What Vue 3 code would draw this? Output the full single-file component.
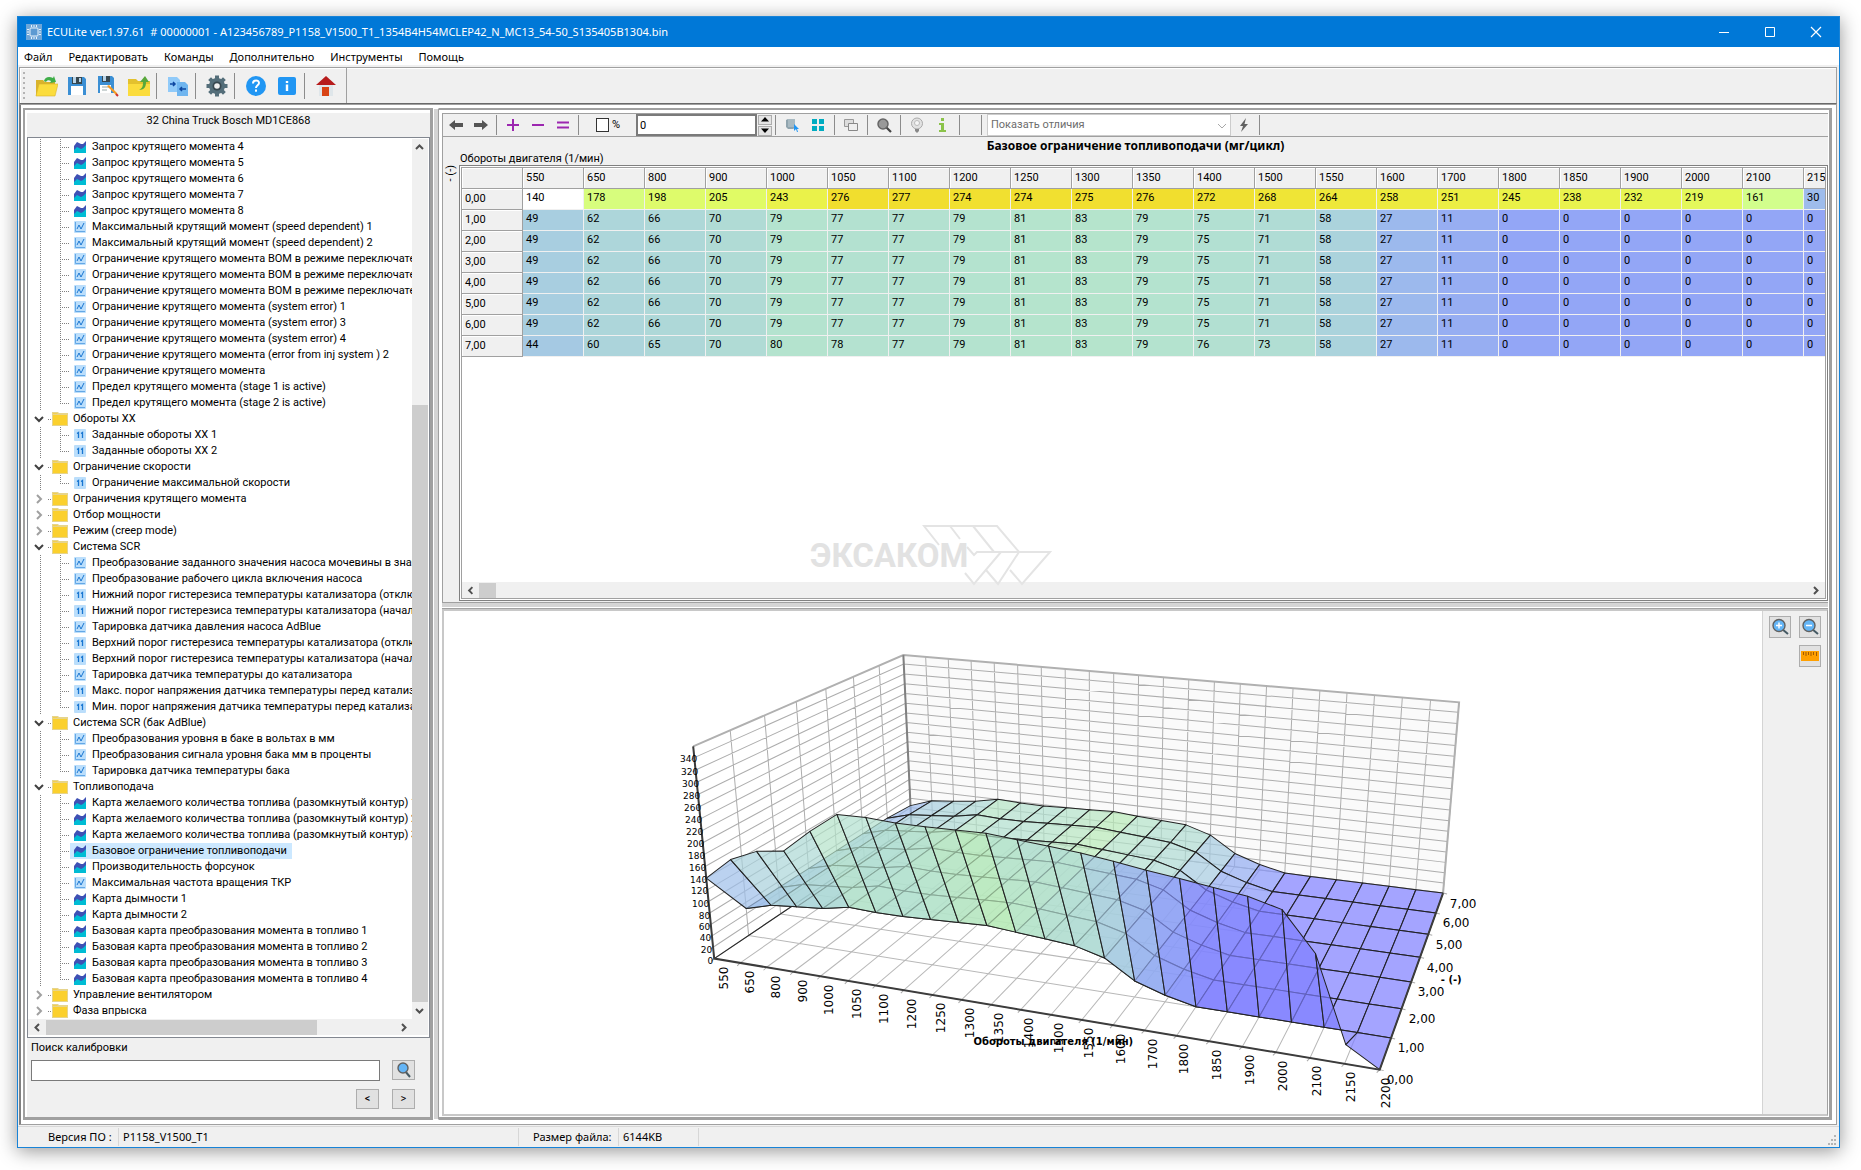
<script setup>
import { ref } from 'vue'

const menu = ['Файл', 'Редактировать', 'Команды', 'Дополнительно', 'Инструменты', 'Помощь']

const leaves = (kind, names) => names.map((name) => ({ kind, name }))
const groups = [
  {
    open: true,
    hidden: true,
    children: [
      ...leaves('map', [4, 5, 6, 7, 8].map((n) => `Запрос крутящего момента ${n}`)),
      ...leaves('curve', [
        'Максимальный крутящий момент (speed dependent) 1',
        'Максимальный крутящий момент (speed dependent) 2',
        'Ограничение крутящего момента ВОМ в режиме переключателя 1',
        'Ограничение крутящего момента ВОМ в режиме переключателя 2',
        'Ограничение крутящего момента ВОМ в режиме переключателя 3',
        'Ограничение крутящего момента (system error) 1',
        'Ограничение крутящего момента (system error) 3',
        'Ограничение крутящего момента (system error) 4',
        'Ограничение крутящего момента (error from inj system ) 2',
        'Ограничение крутящего момента',
        'Предел крутящего момента (stage 1 is active)',
        'Предел крутящего момента (stage 2 is active)'
      ])
    ]
  },
  { name: 'Обороты XX', open: true, children: leaves('value', ['Заданные обороты XX 1', 'Заданные обороты XX 2']) },
  { name: 'Ограничение скорости', open: true, children: leaves('value', ['Ограничение максимальной скорости']) },
  { name: 'Ограничения крутящего момента', children: [] },
  { name: 'Отбор мощности', children: [] },
  { name: 'Режим (creep mode)', children: [] },
  {
    name: 'Система SCR',
    open: true,
    children: [
      ...leaves('curve', ['Преобразование заданного значения насоса мочевины в значение', 'Преобразование рабочего цикла включения насоса']),
      ...leaves('value', ['Нижний порог гистерезиса температуры катализатора (отключение)', 'Нижний порог гистерезиса температуры катализатора (начало)']),
      ...leaves('curve', ['Тарировка датчика давления насоса AdBlue']),
      ...leaves('value', ['Верхний порог гистерезиса температуры катализатора (отключение)', 'Верхний порог гистерезиса температуры катализатора (начало)']),
      ...leaves('curve', ['Тарировка датчика температуры до катализатора']),
      ...leaves('value', ['Макс. порог напряжения датчика температуры перед катализатором', 'Мин. порог напряжения датчика температуры перед катализатором'])
    ]
  },
  {
    name: 'Система SCR (бак AdBlue)',
    open: true,
    children: leaves('curve', ['Преобразования уровня в баке в вольтах в мм', 'Преобразования сигнала уровня бака мм в проценты', 'Тарировка датчика температуры бака'])
  },
  {
    name: 'Топливоподача',
    open: true,
    children: [
      ...leaves('map', [
        'Карта желаемого количества топлива (разомкнутый контур) 1',
        'Карта желаемого количества топлива (разомкнутый контур) 2',
        'Карта желаемого количества топлива (разомкнутый контур) 3',
        'Базовое ограничение топливоподачи',
        'Производительность форсунок'
      ]),
      ...leaves('curve', ['Максимальная частота вращения ТКР']),
      ...leaves('map', [
        'Карта дымности 1',
        'Карта дымности 2',
        'Базовая карта преобразования момента в топливо 1',
        'Базовая карта преобразования момента в топливо 2',
        'Базовая карта преобразования момента в топливо 3',
        'Базовая карта преобразования момента в топливо 4'
      ])
    ]
  },
  { name: 'Управление вентилятором', children: [] },
  { name: 'Фаза впрыска', children: [] }
]
const selected = ref('Базовое ограничение топливоподачи')

const rpm = [550, 650, 800, 900, 1000, 1050, 1100, 1200, 1250, 1300, 1350, 1400, 1500, 1550, 1600, 1700, 1800, 1850, 1900, 2000, 2100, 2150, 2200]
const common = [49, 62, 66, 70, 79, 77, 77, 79, 81, 83, 79, 75, 71, 58, 27, 11, 0, 0, 0, 0, 0, 0, 0]
const values = [
  [140, 178, 198, 205, 243, 276, 277, 274, 274, 275, 276, 272, 268, 264, 258, 251, 245, 238, 232, 219, 161, 30, 0],
  common, common, common, common, common, common,
  [44, 60, 65, 70, 80, 78, 77, 79, 81, 83, 79, 76, 73, 58, 27, 11, 0, 0, 0, 0, 0, 0, 0]
]
const rowName = (j) => `${j},00`

const mix = (stops, v) => {
  let k = 1
  while (k < stops.length - 1 && v > stops[k][0]) k++
  const [v0, a] = stops[k - 1]
  const [v1, b] = stops[k]
  const t = Math.min(1, Math.max(0, (v - v0) / (v1 - v0)))
  return `rgb(${a.map((c, n) => Math.round(c + (b[n] - c) * t)).join(',')})`
}
const cellStops = [
  [0, [147, 166, 246]], [27, [156, 185, 237]], [49, [168, 206, 224]], [66, [174, 216, 216]], [79, [180, 227, 207]],
  [161, [210, 254, 140]], [205, [224, 251, 101]], [243, [234, 242, 74]], [264, [238, 232, 58]], [276, [241, 222, 46]]
]
const surfStops = [
  [0, [126, 126, 255]], [11, [134, 148, 250]], [27, [146, 171, 241]], [49, [158, 191, 234]], [66, [171, 213, 216]],
  [78, [178, 224, 205]], [83, [184, 234, 184]]
]

/* perspective projection of the unit box onto the chart canvas */
const Z_MAX = 358
const NX = 22
const NY = 7
const project = (i, j, v) => {
  const x = i / NX
  const y = j / NY
  const z = v / Z_MAX
  const w = 1 - 0.1458 * x + 0.2693 * y - 0.0509 * z
  return [(715 + 463.8 * x + 442.7 * y - 56.3 * z) / w, (959 - 45 * x + 90 * y - 250 * z) / w]
}
const path = (...pts) => pts.map((p, n) => (n ? 'L' : 'M') + p[0].toFixed(1) + ' ' + p[1].toFixed(1)).join('')
const range = (n) => Array.from({ length: n }, (_, k) => k)

const floorLines = [
  ...range(NX + 1).map((i) => path(project(i, 0, 0), project(i, NY, 0))),
  ...range(NY + 1).map((j) => path(project(0, j, 0), project(NX, j, 0)))
].join('')
const wallLines = [
  ...range(NX + 1).map((i) => path(project(i, NY, 0), project(i, NY, Z_MAX))),
  ...range(NY + 1).map((j) => path(project(0, j, 0), project(0, j, Z_MAX))),
  ...range(18).map((k) => path(project(0, 0, k * 20), project(0, NY, k * 20), project(NX, NY, k * 20)))
].join('')
const wallTop = path(project(0, 0, Z_MAX), project(0, NY, Z_MAX), project(NX, NY, Z_MAX), project(NX, NY, 0))
const backWall = path(project(0, NY, 0), project(0, NY, Z_MAX), project(NX, NY, Z_MAX), project(NX, NY, 0)) + 'Z'
const backEdge = path(project(0, NY, 0), project(0, NY, Z_MAX))
const leftFloor = path(project(0, 0, 0), project(0, NY, 0))
const axes = path(project(0, 0, Z_MAX), project(0, 0, 0), project(NX, 0, 0), project(NX, NY, 0))
const ticks = range(NX + 1).map((i) => {
  const p = project(i, 0, 0)
  return path([p[0] - 3, p[1] + 3], p)
}).join('') + range(18).map((k) => {
  const p = project(0, 0, k * 20)
  return path([p[0] - 3, p[1] + 2], p)
}).join('') + range(NY + 1).map((j) => {
  const p = project(NX, j, 0)
  return path([p[0] + 4, p[1] + 1], p)
}).join('')
const quads = range(NY).reverse().flatMap((j) => range(NX).map((i) => ({
  d: path(project(i, j, values[j][i]), project(i + 1, j, values[j][i + 1]), project(i + 1, j + 1, values[j + 1][i + 1]), project(i, j + 1, values[j + 1][i])) + 'Z',
  fill: mix(surfStops, values[j + 1][i])
})))
const xLabels = rpm.map((t, i) => {
  const [x, y] = project(i, 0, 0)
  return { t, x: Math.round(x + 14 - i / 6), y: Math.round(y + 8) }
})
const yLabels = range(8).map((j) => {
  const [x, y] = project(NX, j, 0)
  return { t: rowName(j), x: Math.round(x + 7), y: Math.round(y + 14) }
})
const zLabels = range(18).map((k) => {
  const [x, y] = project(0, 0, k * 20)
  return { t: k * 20, x: Math.round(x - 1 + k / 4), y: Math.round(y + 5) }
})
</script>

<template>
  <div class="desktop">
    <div class="window">
      <header class="titlebar">
        <svg class="chip" width="16" height="16" viewBox="0 0 16 16"><rect width="16" height="16" fill="#6ea6d8" /><rect x="4" y="4" width="8" height="8" rx="1" fill="#5c9ad2" stroke="#e8f2fb" /><path d="M5.500 1v2M8 1v2M10.500 1v2M5.500 13v2M8 13v2M10.500 13v2M1 5.500h2M1 8h2M1 10.500h2M13 5.500h2M13 8h2M13 10.500h2" stroke="#e8f2fb" /></svg>
        <h1>ECULite ver.1.97.61 &nbsp;# 00000001 - A123456789_P1158_V1500_T1_1354B4H54MCLEP42_N_MC13_54-50_S135405B1304.bin</h1>
        <button class="cap" aria-label="Свернуть"><svg width="12" height="12" viewBox="0 0 12 12"><path d="M1 6.500h10" stroke="#fff" /></svg></button>
        <button class="cap" aria-label="Развернуть"><svg width="12" height="12" viewBox="0 0 12 12"><path d="M1.500 1.500h9v9h-9z" stroke="#fff" fill="none" /></svg></button>
        <button class="cap" aria-label="Закрыть"><svg width="12" height="12" viewBox="0 0 12 12"><path d="M1 1l10 10M11 1L1 11" stroke="#fff" stroke-width="1.200" /></svg></button>
      </header>
      <nav class="menu"><button v-for="m in menu" :key="m">{{ m }}</button></nav>

      <div class="bar">
        <div class="tools">
          <i class="grip"></i>
          <button aria-label="Открыть"><svg width="24" height="24" viewBox="0 0 24 24"><path d="M2 6h7l2 2h10v14H2z" fill="#d9b32c" /><path d="M10 7c1-4 5-5 9-3l1-2 2 6-6 1 1-2c-2-1-4-1-5 1z" fill="#3fae49" /><path d="M5 10h19l-3 12H2z" fill="#fbdc3d" stroke="#d9b32c" stroke-width=".6" /></svg></button>
          <button aria-label="Сохранить"><svg width="24" height="24" viewBox="0 0 24 24"><path d="M3 3h16l2 2v16H3z" fill="#3b8fd4" /><path d="M7 3h10v7H7z" fill="#37474f" /><path d="M8 3h3v6H8zM14 4h2v4h-2z" fill="#b9d4e8" /><path d="M6 12h12v9H6z" fill="#fff" /></svg></button>
          <button aria-label="Сохранить как"><svg width="24" height="24" viewBox="0 0 24 24"><path d="M2 2h14l2 2v15H2z" fill="#3b8fd4" /><path d="M6 2h8v6H6z" fill="#37474f" /><path d="M7 2h3v5H7z" fill="#b9d4e8" /><path d="M4 11h11v8H4z" fill="#fff" /><path d="M6 13h7M6 16h5" stroke="#9aa" /><path d="M11 12l9 9 2 1-1-3-8-8z" fill="#f59b23" /><path d="M20 20l2 2" stroke="#c33" stroke-width="2" /></svg></button>
          <button aria-label="Импорт"><svg width="24" height="24" viewBox="0 0 24 24"><path d="M1 5h8l2 2h12v15H1z" fill="#e3c12e" /><path d="M1 10h22v12H1z" fill="#fbdc3d" /><path d="M12 16c6 0 7-4 7-8h3l-4-6-5 6h3c0 3 0 6-4 8z" fill="#58a83c" /></svg></button>
          <i class="sep"></i>
          <button aria-label="Сравнить"><svg width="24" height="24" viewBox="0 0 24 24"><path d="M2 3h9l3 3v12H2z" fill="#90caf9" /><path d="M11 8h8l3 3v11H11z" fill="#6fb5ef" /><path d="M4 10h5M7 8l2 2-2 2M20 15h-6M16 13l-2 2 2 2" stroke="#0d47a1" stroke-width="1.500" fill="none" /></svg></button>
          <i class="sep"></i>
          <button aria-label="Настройки"><svg width="24" height="24" viewBox="0 0 24 24"><circle cx="12" cy="12" r="8" fill="#546e7a" /><path d="M12 1.500v21M1.500 12h21M4.600 4.600l14.800 14.800M19.400 4.600L4.600 19.400" stroke="#546e7a" stroke-width="4" /><circle cx="12" cy="12" r="4.500" fill="#37474f" /><circle cx="12" cy="12" r="2.800" fill="#efefef" /></svg></button>
          <i class="sep"></i>
          <button aria-label="Справка"><svg width="24" height="24" viewBox="0 0 24 24"><circle cx="12" cy="12" r="10" fill="#2196f3" /><path d="M9 9.500c0-4 6-4 6-.5 0 2.300-3 2.300-3 5" stroke="#fff" stroke-width="2" fill="none" /><rect x="11" y="15.500" width="2" height="2.200" fill="#fff" /></svg></button>
          <button aria-label="О программе"><svg width="24" height="24" viewBox="0 0 24 24"><rect x="3" y="3" width="18" height="18" rx="2" fill="#2196f3" /><path d="M12 7v2M12 10.500V17" stroke="#fff" stroke-width="2.400" /></svg></button>
          <i class="sep"></i>
          <button aria-label="Домой"><svg width="24" height="24" viewBox="0 0 24 24"><path d="M5 11h14v11H5z" fill="#dfe6ea" /><path d="M12 2l10 9H2z" fill="#b71c1c" /><path d="M8 13h7v9H8z" fill="#d84315" /></svg></button>
        </div>
      </div>

      <main class="main">
        <aside class="left">
          <h2>32 China Truck Bosch MD1CE868</h2>
          <div class="tree">
            <div class="viewport">
              <ul class="list">
                <li v-for="(g, gi) in groups" :key="gi">
                  <div v-if="!g.hidden" class="row">
                    <svg class="chev" width="12" height="12" viewBox="0 0 12 12"><path v-if="g.open" d="M2 4l4 4 4-4" stroke="#404040" stroke-width="2" fill="none" /><path v-else d="M4 2l4 4-4 4" stroke="#a0a0a0" stroke-width="2" fill="none" /></svg>
                    <i class="stub"></i>
                    <svg class="folder" width="16" height="14" viewBox="0 0 16 14"><path d="M0 0h6l1 1h9v13H0z" fill="#e6d48c" /><path d="M1 3h14v10H1z" fill="#fbd02d" /><path d="M1 1h4l1 1H1z" fill="#f3cf50" /></svg>
                    <span>{{ g.name }}</span>
                  </div>
                  <ul v-if="g.open" class="list">
                    <li v-for="c in g.children" :key="c.name" class="row leaf">
                      <i class="rail"></i><i class="branch"></i>
                      <span class="item" :class="{ on: c.name === selected }">
                        <svg v-if="c.kind === 'map'" width="12" height="12" viewBox="0 0 12 12"><path d="M0 5l3-4 4 2 2 0 3-3v12H0z" fill="#3f51b5" /><path d="M0 9l3-3 4 2 2-1 3-3v8H0z" fill="#00bcd4" /></svg>
                        <svg v-else-if="c.kind === 'curve'" width="12" height="12" viewBox="0 0 12 12"><rect width="12" height="12" rx="1" fill="#bbdefb" /><path d="M1.500 1v9.500H11" stroke="#64a8e6" fill="none" /><path d="M3 8l2-4 2 4 3-6" stroke="#1976d2" fill="none" /></svg>
                        <svg v-else width="12" height="12" viewBox="0 0 12 12"><rect width="12" height="12" rx="1" fill="#bbdefb" /><path d="M3 4.500l1.500-1V9M7 4.500l1.500-1V9" stroke="#1976d2" stroke-width="1.300" fill="none" /></svg>
                        <span>{{ c.name }}</span>
                      </span>
                    </li>
                  </ul>
                </li>
              </ul>
              <div class="vscroll">
                <svg width="15" height="17" viewBox="0 0 15 17"><path d="M4 10l3.500-3.500L11 10" stroke="#505050" stroke-width="2" fill="none" /></svg>
                <i class="track"></i><i class="thumb"></i>
                <svg width="15" height="17" viewBox="0 0 15 17"><path d="M4 7l3.500 3.500L11 7" stroke="#505050" stroke-width="2" fill="none" /></svg>
              </div>
            </div>
            <div class="hscroll">
              <svg width="18" height="15" viewBox="0 0 18 15"><path d="M11 4L7.500 7.500 11 11" stroke="#505050" stroke-width="2" fill="none" /></svg>
              <i class="thumb"></i><i class="track"></i>
              <svg width="18" height="15" viewBox="0 0 18 15"><path d="M7 4l3.500 3.500L7 11" stroke="#505050" stroke-width="2" fill="none" /></svg>
              <i class="corner"></i>
            </div>
          </div>
          <form class="search" @submit.prevent>
            <label for="find">Поиск калибровки</label>
            <div class="line">
              <input id="find" type="text" />
              <button class="btn" aria-label="Найти"><svg width="18" height="18" viewBox="0 0 18 18"><path d="M10 10l5 6" stroke="#455a64" stroke-width="2" /><circle cx="8" cy="7" r="5" fill="#64b5f6" stroke="#616161" stroke-width="1.400" /></svg></button>
            </div>
            <div class="line end"><button class="btn">&lt;</button><button class="btn">&gt;</button></div>
          </form>
        </aside>
        <i class="vsplit"></i>

        <section class="right">
          <div class="editor">
            <div class="subbar">
              <button aria-label="Назад"><svg width="16" height="16" viewBox="0 0 16 16"><path d="M1 8l6-5v3h8v4H7v3z" fill="#555" /></svg></button>
              <button aria-label="Вперёд"><svg width="16" height="16" viewBox="0 0 16 16"><path d="M15 8L9 3v3H1v4h8v3z" fill="#555" /></svg></button>
              <i class="sep"></i>
              <button aria-label="Увеличить"><svg width="16" height="16" viewBox="0 0 16 16"><path d="M8 2v12M2 8h12" stroke="#9c27b0" stroke-width="2" /></svg></button>
              <button aria-label="Уменьшить"><svg width="16" height="16" viewBox="0 0 16 16"><path d="M2 8h12" stroke="#9c27b0" stroke-width="2" /></svg></button>
              <button aria-label="Присвоить"><svg width="16" height="16" viewBox="0 0 16 16"><path d="M2 5.500h12M2 10.500h12" stroke="#9c27b0" stroke-width="2" /></svg></button>
              <i class="sep"></i>
              <label class="pct"><input type="checkbox" />%</label>
              <input class="num" type="text" value="0" aria-label="Значение" />
              <span class="spin">
                <button aria-label="Больше"><svg width="8" height="5" viewBox="0 0 8 5"><path d="M4 0l4 4.500H0z" /></svg></button>
                <button aria-label="Меньше"><svg width="8" height="5" viewBox="0 0 8 5"><path d="M4 5l4-4.500H0z" /></svg></button>
              </span>
              <i class="sep"></i>
              <button class="w" aria-label="3D вид"><svg width="16" height="16" viewBox="0 0 16 16"><path d="M2 3l2-1h7v9l-2 1H4l-2-2z" fill="#90a4ae" /><path d="M4 2h7v8H4z" fill="#a9bac2" /><path d="M10 7l5 5-2 0 1 3-1 0-1-3-2 2z" fill="#2196f3" /></svg></button>
              <button class="w" aria-label="Таблица"><svg width="16" height="16" viewBox="0 0 16 16"><path d="M2 2h5v5H2zM9 2h5v5H9zM2 9h5v5H2zM9 9h5v5H9z" fill="#00acc1" /></svg></button>
              <i class="sep"></i>
              <button class="w" aria-label="Копия"><svg width="16" height="16" viewBox="0 0 16 16"><path d="M1.500 2.500h9v7h-9z" fill="#ddd" stroke="#999" /><path d="M5.500 6.500h9v7h-9z" fill="#eee" stroke="#888" /></svg></button>
              <i class="sep"></i>
              <button class="w" aria-label="Поиск"><svg width="16" height="16" viewBox="0 0 16 16"><path d="M10 10l5 5" stroke="#444" stroke-width="2.200" /><circle cx="7" cy="7" r="5" fill="#999" stroke="#666" stroke-width="1.500" /></svg></button>
              <i class="sep"></i>
              <button class="w" aria-label="Подсказка"><svg width="16" height="16" viewBox="0 0 16 16"><circle cx="8" cy="6.500" r="5.500" fill="#e2e2e2" stroke="#aaa" /><circle cx="8" cy="6" r="2.500" fill="#f6f6f6" stroke="#bbb" /><path d="M6 12h4v2l-2 2-2-2z" fill="#888" /></svg></button>
              <button class="w" aria-label="Сведения"><svg width="16" height="16" viewBox="0 0 16 16"><path d="M6 1h3v3H6zM4 6h5v7h2v2H4v-2h2V8H4z" fill="#8bc34a" /></svg></button>
              <i class="sep"></i><i class="sep far"></i>
              <span class="combo">
                <select aria-label="Показать отличия"><option>Показать отличия</option></select>
                <svg width="10" height="6" viewBox="0 0 10 6"><path d="M1 1l4 4 4-4" stroke="#a8a8a8" fill="none" /></svg>
              </span>
              <button aria-label="Применить"><svg width="16" height="16" viewBox="0 0 16 16"><path d="M10 1L4 9h3l-2 6 7-8H8.500z" fill="#616161" /></svg></button>
              <i class="sep"></i>
            </div>
            <div class="caption">
              <h3>Базовое ограничение топливоподачи (мг/цикл)</h3>
              <p>Обороты двигателя (1/мин)</p>
            </div>
            <div class="sheet">
              <span class="side">- (-)</span>
              <div class="frame">
                <div class="inner">
                  <div class="cells">
                    <table>
                      <thead><tr><th></th><th v-for="r in rpm" :key="r">{{ r }}</th></tr></thead>
                      <tbody>
                        <tr v-for="(row, j) in values" :key="j">
                          <th>{{ rowName(j) }}</th>
                          <td v-for="(v, i) in row" :key="i" :style="{ background: i + j ? mix(cellStops, v) : '#fff' }">{{ v }}</td>
                        </tr>
                      </tbody>
                    </table>
                  </div>
                  <div class="hscroll sheetscroll">
                    <svg width="17" height="15" viewBox="0 0 18 15"><path d="M11 4L7.500 7.500 11 11" stroke="#505050" stroke-width="2" fill="none" /></svg>
                    <i class="thumb"></i><i class="track"></i>
                    <svg width="18" height="15" viewBox="0 0 18 15"><path d="M7 4l3.500 3.500L7 11" stroke="#505050" stroke-width="2" fill="none" /></svg>
                  </div>
                </div>
                <div class="mark">
                  <span>ЭКСАКОМ</span>
                  <svg width="130" height="62" viewBox="922 524 130 62"><path d="M939 545L924 526h73l22 26M950 526l10 13M973 526l21 26M967 547l7 8 3-3h73l-28 32-12-14M1019 552l-21 32-12-14M1001 552l-27 32-9-11" fill="none" stroke="#e4e4e4" stroke-width="2" /></svg>
                </div>
              </div>
            </div>
          </div>
          <i class="hsplit"></i>
          <div class="plot">
            <svg class="chart" viewBox="445 613 1317 500">
              <path :d="backWall" fill="#fafafa" />
              <g fill="none" stroke="#adadad">
                <path :d="floorLines" stroke="#b8b8b8" />
                <path :d="wallLines" />
                <path :d="wallTop" stroke="#b0b0b0" stroke-width="2" />
                <path :d="backEdge" stroke="#808080" stroke-width="2" />
                <path :d="leftFloor" stroke="#222" />
              </g>
              <path v-for="(q, n) in quads" :key="n" :d="q.d" :fill="q.fill" fill-opacity=".7" stroke="#222" stroke-linejoin="round" />
              <path :d="ticks" stroke="#aaa" stroke-width="1" />
              <path :d="axes" fill="none" stroke="#3c3c3c" stroke-width="2" />
              <g class="big">
                <text v-for="l in xLabels" :key="l.t" text-anchor="end" :transform="`translate(${l.x} ${l.y}) rotate(-90)`">{{ l.t }}</text>
                <text v-for="l in yLabels" :key="l.t" :x="l.x" :y="l.y">{{ l.t }}</text>
              </g>
              <g class="small"><text v-for="l in zLabels" :key="l.t" text-anchor="end" :x="l.x" :y="l.y">{{ l.t }}</text></g>
              <g class="name">
                <text x="974" y="1045">Обороты двигателя (1/мин)</text>
                <text x="1441" y="983">- (-)</text>
              </g>
            </svg>
            <div class="zoomer">
              <button class="btn" aria-label="Приблизить"><svg width="18" height="18" viewBox="0 0 18 18"><path d="M11 11l6 5" stroke="#455a64" stroke-width="2" /><circle cx="8" cy="7.500" r="6" fill="#64b5f6" stroke="#616161" stroke-width="1.400" /><path d="M5 7.500h6M8 4.500v6" stroke="#fff" stroke-width="1.500" /></svg></button>
              <button class="btn" aria-label="Отдалить"><svg width="18" height="18" viewBox="0 0 18 18"><path d="M11 11l6 5" stroke="#455a64" stroke-width="2" /><circle cx="8" cy="7.500" r="6" fill="#64b5f6" stroke="#616161" stroke-width="1.400" /><path d="M5 7.500h6" stroke="#fff" stroke-width="1.500" /></svg></button>
              <button class="btn" aria-label="Линейка"><svg width="18" height="18" viewBox="0 0 18 18"><path d="M0 4h18v10H0z" fill="#ffa000" /><path d="M2.500 5v3M5 5v4M7.500 5v3M10 5v4M12.500 5v3M15.500 5v4" stroke="#a05a00" /></svg></button>
            </div>
          </div>
        </section>
      </main>

      <footer class="status">
        <span class="s1">Версия ПО :</span><span class="s2">P1158_V1500_T1</span><span class="s3">Размер файла:</span><span class="s4">6144KB</span>
        <svg width="10" height="10" viewBox="0 0 10 10"><path d="M7 0h2v2H7zM4 4h2v2H4zM7 4h2v2H7zM1 8h2v2H1zM4 8h2v2H4zM7 8h2v2H7z" fill="#b4b4b4" /></svg>
      </footer>
    </div>
  </div>
</template>

<style>
body { margin: 0; background: #fff; }
</style>

<style scoped>
* { box-sizing: border-box; }
.desktop { height: 100vh; padding: 16px 21px 22px 17px; font: 11px/16px "Noto Sans", sans-serif; color: #000; overflow: hidden; }
.window { height: 100%; display: flex; flex-direction: column; background: #f0f0f0; border: 1px solid #1883d7; box-shadow: 0 3px 18px rgba(0, 0, 0, .42); }
button { font: inherit; padding: 0; border: 0; background: none; display: flex; align-items: center; justify-content: center; color: inherit; }
h1, h2, h3, p, ul { margin: 0; padding: 0; font: inherit; }
svg { display: block; flex: none; }

.titlebar { flex: none; height: 30px; display: flex; align-items: center; background: #0078d7; color: #fff; padding-left: 8px; }
.titlebar h1 { flex: 1; margin-left: 5px; white-space: nowrap; overflow: hidden; }
.cap { width: 46px; height: 29px; }
.menu { flex: none; height: 18px; display: flex; gap: 16px; padding: 2px 0 0 6px; background: #fff; }

.bar { flex: none; height: 37px; margin: 2px 2px 0 1px; border: 1px solid #a0a0a0; border-bottom-color: #696969; display: flex; box-shadow: inset 1px 1px #fff; }
.tools { display: flex; align-items: center; border-right: 1px solid #a0a0a0; padding: 0 5px 0 3px; }
.tools button { width: 31px; height: 32px; }
.grip { width: 2px; height: 27px; margin-right: 5px; background: repeating-linear-gradient(#b4b4b4 0 2px, transparent 2px 5px); }
.sep { flex: none; width: 7px; height: 20px; background: linear-gradient(90deg, transparent 3px, #8c8c8c 3px 4px, transparent 4px); }
.tools .sep { width: 8px; height: 26px; background: linear-gradient(90deg, transparent 2px, #8c8c8c 2px 3px, transparent 3px); }

.main { flex: 1; min-height: 0; margin: 0 2px 1px 1px; display: flex; background: #fff; border: 1px solid #a0a0a0; border-left: 2px solid #808080; padding: 3px 4px 4px 2px; font-family: Roboto, "Noto Sans", sans-serif; }
.left { flex: none; width: 410px; display: flex; flex-direction: column; border: 2px solid #a0a0a0; border-right-width: 3px; border-bottom-width: 3px; padding: 2px 0 0 2px; }
.left h2 { height: 25px; background: #f0f0f0; text-align: center; line-height: 15px; flex: none; border-top: 1px solid #fff; }
.tree { flex: none; border: 1px solid #828790; background: #fff; padding: 1px 1px 2px 0; }
.viewport { display: flex; }
.viewport > .list { flex: 1; min-width: 0; overflow: hidden; }
.list { list-style: none; }
.row { display: flex; height: 16px; align-items: center; white-space: nowrap; }
.chev { margin: 0 3px 0 5px; }
.stub { width: 4px; height: 1px; background: repeating-linear-gradient(90deg, #808080 0 1px, transparent 1px 2px); }
.folder { margin-right: 5px; }
.rail, .branch { flex: none; height: 16px; background: repeating-linear-gradient(#808080 0 1px, transparent 1px 2px) 0 0 / 1px 16px no-repeat; }
.rail { width: 20px; margin-left: 12px; }
.branch { width: 10px; background: repeating-linear-gradient(#808080 0 1px, transparent 1px 2px) 0 0 / 1px 16px no-repeat, repeating-linear-gradient(90deg, #808080 0 1px, transparent 1px 2px) 0 8px / 10px 1px no-repeat; }
.leaf:last-child .branch { background-size: 1px 8px, 10px 1px; }
.item { display: flex; align-items: center; height: 16px; padding: 0 5px 0 4px; gap: 6px; }
.item.on { background: #cce8ff; }
.vscroll { flex: none; width: 16px; display: flex; flex-direction: column; background: #f0f0f0; }
.vscroll .track { flex: 249; }
.vscroll .thumb { flex: 597; background: #cdcdcd; }
.hscroll { display: flex; height: 16px; background: #f0f0f0; align-items: center; }
.hscroll .track { flex: 78; }
.hscroll .thumb { flex: 271; height: 15px; background: #cdcdcd; }
.corner { width: 15px; }
.search { flex: 1; background: #f0f0f0; padding: 2px 15px 0 4px; }
.search label { display: block; height: 20px; }
.line { display: flex; justify-content: space-between; margin-bottom: 8px; }
.line.end { justify-content: flex-end; gap: 13px; }
.line input { width: 349px; height: 21px; border: 1px solid #7a7a7a; background: #fff; padding: 0 3px; font: inherit; }
.btn { width: 23px; height: 20px; border: 1px solid #adadad; background: #e1e1e1; }

.vsplit { flex: none; width: 6px; background: #d4d4d4; border: 1px solid #fff; border-right-color: #a0a0a0; }
.right { flex: 1; min-width: 0; display: flex; flex-direction: column; border: solid #a0a0a0; border-width: 2px 3px 3px 0; padding: 3px 1px 1px 3px; }
.editor { flex: 490 1 0; min-height: 0; display: flex; flex-direction: column; background: #f0f0f0; border: solid #a0a0a0; border-width: 1px 0 0 1px; padding-bottom: 1px; }
.subbar { flex: none; height: 23px; display: flex; align-items: center; border-bottom: 1px solid #a0a0a0; }
.subbar > button { width: 25px; height: 22px; }
.subbar > button.w { width: 26px; }
.sep.far { margin-left: 15px; }
.pct { display: flex; align-items: center; width: 54px; padding-left: 14px; gap: 3px; }
.pct input { appearance: none; width: 13px; height: 14px; margin: 0; border: 1px solid #333; background: #fff; }
.num { width: 121px; height: 22px; border: 2px solid #7a7a7a; border-radius: 0; background: #fff; font: inherit; padding: 0 2px; }
.spin { display: flex; flex-direction: column; gap: 1px; margin-left: 1px; }
.spin button { width: 14px; height: 10px; background: #e4e4e4; border: 1px solid #adadad; }
.combo { position: relative; width: 244px; height: 22px; margin-left: 2px; }
.combo select { appearance: none; width: 100%; height: 22px; border: 1px solid #ccc; border-radius: 0; background: #fff; color: #6d6d6d; font: inherit; padding: 0 3px; opacity: 1; }
.combo svg { position: absolute; right: 4px; top: 9px; pointer-events: none; }
.caption { flex: none; height: 28px; }
.caption h3 { font: 700 12px/17px "Noto Sans", sans-serif; text-align: center; height: 14px; }
.caption p { padding-left: 17px; line-height: 15px; }
.sheet { flex: 1; min-height: 0; display: flex; }
.side { width: 16px; writing-mode: vertical-rl; transform: rotate(180deg); align-self: flex-start; text-align: right; line-height: 16px; }
.frame { position: relative; flex: 1; min-width: 0; border: 1px solid #808080; background: #fff; padding: 1px; }
.inner { height: 100%; border: 1px solid #a0a0a0; display: flex; flex-direction: column; }
.cells { flex: 1; min-height: 0; overflow: hidden; }
table { border-collapse: separate; border-spacing: 0; table-layout: fixed; width: 1464px; }
th, td { height: 21px; padding: 0 0 2px 3px; font-weight: 400; text-align: left; line-height: 16px; border: solid #f0f0f0; border-width: 0 1px 1px 0; }
th { background: #f0f0f0; border-color: #a0a0a0; box-shadow: inset 1px 1px #fff; padding-bottom: 0; }
.sheetscroll .thumb { flex: none; width: 17px; }
.mark { position: absolute; left: 350px; top: 358px; display: flex; pointer-events: none; }
.mark span { font: 700 33px/64px Roboto, sans-serif; color: #e2e2e2; width: 112px; white-space: nowrap; }

.hsplit { flex: none; height: 7px; background: #d4d4d4; border: solid #a0a0a0; border-width: 1px 0; box-shadow: inset 0 -1px #fff; }
.plot { flex: 506 1 0; min-height: 0; display: flex; border: 2px solid #c8c8c8; border-right: 1px solid #a0a0a0; }
.chart { flex: 1; min-width: 0; height: 100%; }
.chart text { font-family: "DejaVu Sans", sans-serif; }
.big { font-size: 12px; }
.small { font-size: 9px; }
.name { font-size: 10px; font-weight: 700; }
.zoomer { flex: none; width: 65px; background: #f0f0f0; border-left: 1px solid #d4d4d4; display: flex; flex-wrap: wrap; justify-content: flex-end; align-content: flex-start; gap: 7px 8px; padding: 5px 6px; }
.zoomer .btn { width: 22px; height: 22px; }

.status { flex: none; height: 21px; display: flex; border-top: 1px solid #d7d7d7; line-height: 18px; white-space: nowrap; }
.status span { border-right: 1px solid #d7d7d7; margin: 1px 0; }
.s1 { width: 101px; padding-left: 30px; }
.s2 { width: 400px; padding-left: 4px; }
.s3 { width: 100px; padding-left: 14px; }
.s4 { width: 80px; padding-left: 4px; }
.status svg { margin: 8px 2px 0 auto; }
</style>
